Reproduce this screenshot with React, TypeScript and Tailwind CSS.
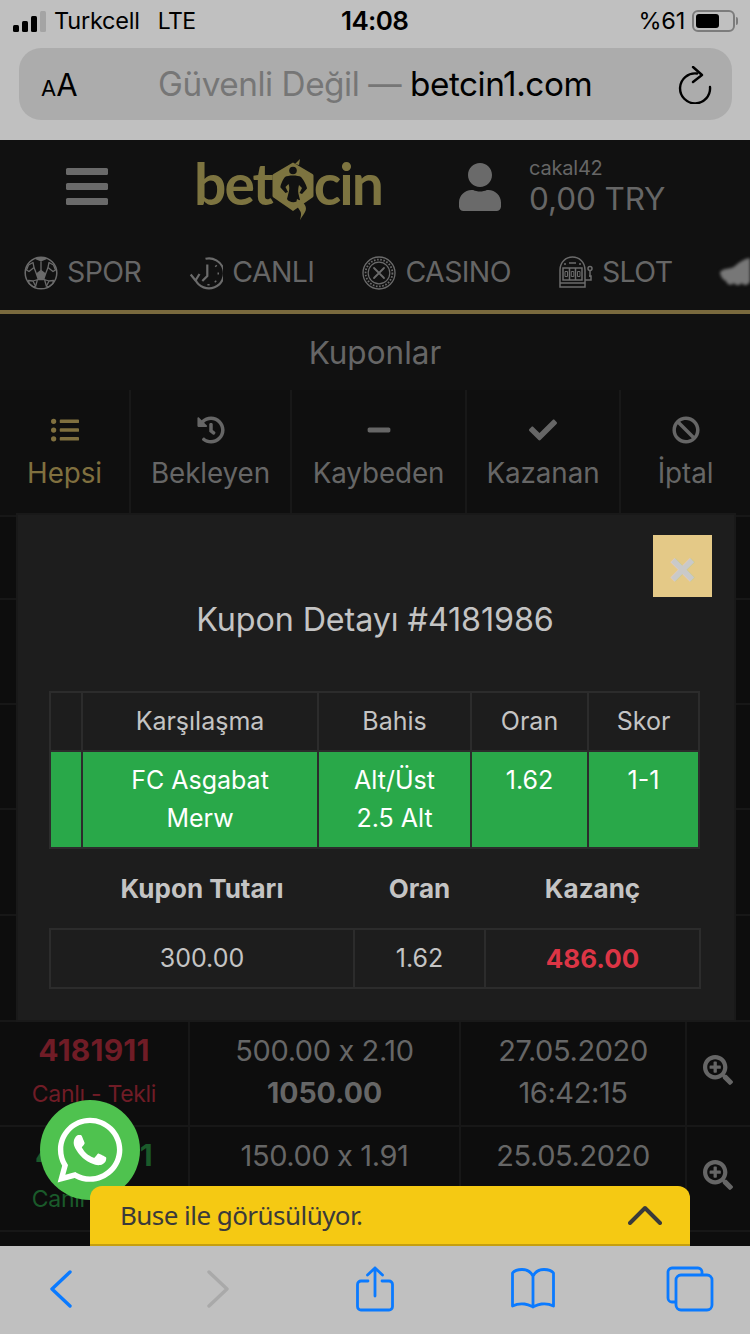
import React from "react";
import { FaBan, FaCheck, FaHistory, FaListUl, FaMinus, FaSearchPlus, FaUser, FaWhatsapp } from "react-icons/fa";

const sans = "font-['Inter','Liberation_Sans',sans-serif]";

function Football() {
  return (
    <svg width="34" height="34" viewBox="0 0 34 34" fill="none" stroke="#6b6b6b" strokeWidth="1.300" strokeLinejoin="round">
      <circle cx="17" cy="17" r="15.800" strokeWidth="1.500" />
      <path d="M12.500 18l4.500-3.500 4.500 3.500-1.800 5.500h-5.400z" fill="#6b6b6b" />
      <path d="M11 3l6 2.500L23 3l-1-1.500H12z" fill="#6b6b6b" stroke="none" />
      <path d="M4.500 9l4.500-2.500 1 5-5 4-2.500-1.500z" />
      <path d="M29.500 9 25 6.500l-1 5 5 4 2.500-1.500z" />
      <path d="M4.500 24.500l4.500.5 2.500 5-2 1-4.500-3.500zM29.500 24.500l-4.500.5-2.500 5 2 1 4.500-3.500z" />
      <path d="M17 5.500v9M10 11.500l2.500 6.500M24 11.500L21.500 18M9 25l5-1.500M25 25l-5-1.500M11.500 30.500l2-7M22.500 30.500l-2-7" />
    </svg>
  );
}

function LiveClock() {
  return (
    <svg width="34" height="34" viewBox="0 0 34 34" fill="none" stroke="#6b6b6b" strokeWidth="2.200">
      <path d="M16.500 2.800A15 15 0 1 1 6.500 24" />
      <path d="M1.700 18.500 6.500 24.500l4-6.500" strokeLinejoin="round" />
      <path d="M18.300 8.500V20l-5 5" strokeWidth="2.200" />
      <path d="M26.500 9.500l1 1M28.500 17.500h1.500M26 25l1 1M19.500 28v1.500" />
    </svg>
  );
}

function Roulette() {
  return (
    <svg width="34" height="34" viewBox="0 0 34 34" fill="none" stroke="#6b6b6b">
      <circle cx="17" cy="17" r="16" strokeWidth="1.300" />
      <circle cx="17" cy="17" r="13.400" strokeWidth="1.800" strokeDasharray="1.600 1.600" />
      <circle cx="17" cy="17" r="10.800" strokeWidth="1.200" />
      <path d="M12 12l10 10M22 12 12 22" strokeWidth="1.800" strokeLinecap="round" />
    </svg>
  );
}

function SlotMachine() {
  return (
    <svg width="34" height="34" viewBox="0 0 34 34" fill="none" stroke="#6b6b6b" strokeWidth="1.500">
      <path d="M1 31V14C1 6 7 1 13.500 1S26 6 26 14v17z" />
      <path d="M1 27h25M10 7h7M5 8h2M20 8h2" />
      <rect x="4" y="12" width="19" height="12" />
      <path d="M10.500 12v12M16.500 12v12" />
      <path d="M6 15.500h2.500v5H6zM12.300 15.500h2.500v5h-2.500zM18.500 15.500H21v5h-2.500z" strokeWidth="1" />
      <circle cx="31" cy="12.500" r="2" />
      <path d="M31 14.500V21M26 24h6v-4h-2" />
    </svg>
  );
}

function HorseBlob() {
  return (
    <svg width="30" height="30" viewBox="0 0 30 30" fill="#777" className="shrink-0 blur-[1.500px]">
      <path d="M0 14C5 9 10 12 15 8 19 4 24 1 30 0v24c-3 4-6 4-8 1-3 3-6 3-8 0-3 3-7 2-8-2-3-1-6-5-6-9z" />
    </svg>
  );
}

function Genie() {
  return (
    <svg width="46" height="62" viewBox="0 0 46 62" className="shrink-0">
      <path d="M23 3.500 42.500 15a2 2 0 0 1 1 1.800v20a2 2 0 0 1-1 1.700L23 52 3.500 38.500a2 2 0 0 1-1-1.700v-20a2 2 0 0 1 1-1.800z" fill="#7d7440" />
      <path d="M25 5l5-5-1 6z" fill="#7d7440" />
      <circle cx="23" cy="11.500" r="3.800" fill="#111" />
      <path d="M15 18c3-2 13-2 16 0 2 2 6 9 6 11.500L32 35l-2.500-1 2.500-5-3-3c-1 4-1 6-.5 9l1.500 6c-4 3-11 3-13-1l2-8c.500-3 .300-5-.5-7l-3 3 2.500 5-2.500 1-5-5.500C10 27 13 20 15 18z" fill="#111" />
      <path d="M27 40c7 3 11 8 8 13-1 2-2.500 4-5 8 1-4 2-7-.5-10-2-3-4-6-2.500-11z" fill="#7d7440" />
    </svg>
  );
}

function Reload() {
  return (
    <svg width="34" height="38" viewBox="0 0 34 38" fill="none" stroke="#000" strokeWidth="2.400" strokeLinecap="round" strokeLinejoin="round">
      <path d="M19 7.500A15 15 0 1 0 32 21" />
      <path d="M15 1l9 8-9 7" />
    </svg>
  );
}

const blue = "#0a7aff";

function Toolbar() {
  return (
    <div className="h-[88px] shrink-0 bg-[#c0c0c0] flex items-center">
      <svg className="ml-[49px] -mt-[3px]" width="24" height="38" viewBox="0 0 24 38" fill="none" stroke={blue} strokeWidth="3.400" strokeLinecap="round" strokeLinejoin="round">
        <path d="M21 2 3 19l18 17" />
      </svg>
      <svg className="ml-[133px] -mt-[3px]" width="24" height="38" viewBox="0 0 24 38" fill="none" stroke="#a9a9a9" strokeWidth="3.400" strokeLinecap="round" strokeLinejoin="round">
        <path d="M3 2l18 17L3 36" />
      </svg>
      <svg className="ml-[126px] -mt-[2px]" width="38" height="46" viewBox="0 0 38 46" fill="none" stroke={blue} strokeWidth="2.800" strokeLinecap="round" strokeLinejoin="round">
        <path d="M12 15H5a3.500 3.500 0 0 0-3.500 3.500v22A3.500 3.500 0 0 0 5 44h28a3.500 3.500 0 0 0 3.500-3.500v-22A3.500 3.500 0 0 0 33 15h-7" />
        <path d="M19 30V2M11.500 9 19 2l7.500 7" />
      </svg>
      <svg className="ml-[116px] -mt-[3px]" width="46" height="42" viewBox="0 0 46 42" fill="none" stroke={blue} strokeWidth="2.800" strokeLinecap="round" strokeLinejoin="round">
        <path d="M23 8c-2-4-6-6.500-11-6.500C7 1.500 4 3 2.500 5v33c4-2 8-2.500 12-2 4 .500 6.500 2 8.500 3 2-1 4.500-2.500 8.500-3s8 0 12 2V5C42 3 39 1.500 34 1.500 29 1.500 25 4 23 8zM23 8v31" />
      </svg>
      <svg className="ml-[110px] -mt-[2px]" width="48" height="46" viewBox="0 0 48 46" fill="none" stroke={blue} strokeWidth="2.800" strokeLinejoin="round">
        <path d="M36 8V6a4 4 0 0 0-4-4H6a4 4 0 0 0-4 4v26a4 4 0 0 0 4 4h4" />
        <rect x="10" y="9" width="36" height="35" rx="5" />
      </svg>
    </div>
  );
}

function StatusUrl() {
  return (
    <div className={`h-[140px] shrink-0 bg-[#c0c0c0] ${sans} flex flex-col`}>
      <div className="h-[48px] relative flex items-center pl-[13px] pr-[12px] pb-[6px] text-[#000]">
        <div className="flex items-end gap-[3px] h-[22px]">
          <span className="w-[6px] h-[7px] rounded-[1.500px] bg-black" />
          <span className="w-[6px] h-[11px] rounded-[1.500px] bg-black" />
          <span className="w-[6px] h-[16px] rounded-[1.500px] bg-black" />
          <span className="w-[6px] h-[21px] rounded-[1.500px] bg-[#a4a4a4]" />
        </div>
        <span className="ml-[8px] text-[23.500px] tracking-[-0.2px]">Turkcell</span>
        <span className="ml-[18px] text-[23px] tracking-[-0.6px]">LTE</span>
        <span className="absolute left-[341px] top-[6px] text-[26px] font-semibold leading-[30px] tracking-[-0.6px]">14:08</span>
        <span className="ml-auto text-[23.500px] tracking-[-0.2px]">%61</span>
        <div className="ml-[7px] flex items-center">
          <div className="w-[43px] h-[22px] rounded-[6px] border-2 border-[#7c7c7c] p-[2px]">
            <div className="h-full w-[23px] rounded-[3px] bg-black" />
          </div>
          <div className="w-[2px] h-[8px] rounded-r bg-[#7c7c7c] ml-[1px]" />
        </div>
      </div>
      <div className="mx-[19px] h-[72px] w-[713px] rounded-[22px] bg-[#acacac] flex items-center pl-[22px] pr-[20px]">
        <span className="w-[38px] leading-none whitespace-nowrap">
          <span className="text-[22px]">A</span>
          <span className="text-[31px]">A</span>
        </span>
        <span className="ml-[79px] mt-[1px] text-[33.300px] tracking-[-0.45px] whitespace-nowrap text-[#767676]">
          Güvenli Değil — <span className="text-black">betcin1.com</span>
        </span>
        <span className="ml-auto mt-[2px]"><Reload /></span>
      </div>
    </div>
  );
}

function SiteHeader() {
  return (
    <div className="h-[95px] bg-[#111] flex items-center pl-[66px]">
      <div className="w-[42px] flex flex-col gap-[8px] -mt-[2px]">
        <span className="h-[7px] rounded-[1.500px] bg-[#6a6a6a]" />
        <span className="h-[7px] rounded-[1.500px] bg-[#6a6a6a]" />
        <span className="h-[7px] rounded-[1.500px] bg-[#6a6a6a]" />
      </div>
      <div className="ml-[87px] w-[186px] flex items-center justify-center -mt-[2px] font-['Lato',sans-serif] font-bold text-[57px] leading-none text-[#7d7440] tracking-[-2px] whitespace-nowrap">
        <span className="-mt-[6px]">bet</span>
        <span className="-mx-[2px] mt-[6px]"><Genie /></span>
        <span className="-mt-[6px]">cin</span>
      </div>
      <FaUser className="ml-[75px] -mt-[2px] text-[#6a6a6a] shrink-0" size={48} />
      <div className={`ml-[25px] ${sans} text-[#666] -mt-[3px]`}>
        <div className="text-[20px] leading-[24px] tracking-[-0.2px]">cakal42</div>
        <div className="text-[31.500px] leading-[37px] tracking-[-0.1px]">0,00 TRY</div>
      </div>
    </div>
  );
}

function Nav() {
  const items: [React.ReactNode, string][] = [
    [<Football />, "SPOR"],
    [<LiveClock />, "CANLI"],
    [<Roulette />, "CASINO"],
    [<SlotMachine />, "SLOT"],
  ];
  return (
    <div className={`h-[79px] shrink-0 bg-[#111] border-b-4 border-[#7a6a3e] flex items-center gap-[48px] pl-[24px] overflow-hidden ${sans}`}>
      {items.map(([icon, label]) => (
        <div key={label} className="flex items-center gap-[9px] shrink-0 text-[28.500px] text-[#666] tracking-[-0.6px]">
          {icon}
          <span>{label}</span>
        </div>
      ))}
      <HorseBlob />
    </div>
  );
}

function Tabs() {
  const tabs = [
    { w: "w-[131px]", icon: <FaListUl size={28} />, label: "Hepsi", active: true },
    { w: "w-[161px]", icon: <FaHistory size={28} />, label: "Bekleyen" },
    { w: "w-[175px]", icon: <FaMinus size={26} />, label: "Kaybeden" },
    { w: "w-[154px]", icon: <FaCheck size={28} />, label: "Kazanan" },
    { w: "w-[129px]", icon: <FaBan size={28} />, label: "İptal" },
  ];
  return (
    <div className={`h-[125px] flex bg-[#0f0f0f] ${sans}`}>
      {tabs.map((t) => (
        <div
          key={t.label}
          className={`${t.w} flex flex-col items-center pt-[25px] border-r-2 border-[#181818] last:border-r-0 ${t.active ? "text-[#80703f]" : "text-[#666]"}`}
        >
          <div className="h-[30px] flex items-center">{t.icon}</div>
          <div className="text-[27.800px] leading-[34px] mt-[11px] tracking-[-0.1px]">{t.label}</div>
        </div>
      ))}
    </div>
  );
}

const rows = [
  { id: "", line1: "", line2: "", d1: "", d2: "", type: "", h: "h-[83px]" },
  { id: "", line1: "", line2: "", d1: "", d2: "", type: "", h: "h-[105px]" },
  { id: "", line1: "", line2: "", d1: "", d2: "", type: "", h: "h-[105px]" },
  { id: "", line1: "", line2: "", d1: "", d2: "", type: "", h: "h-[106px]" },
  { id: "", line1: "", line2: "", d1: "", d2: "", type: "", h: "h-[106px]" },
  { id: "4181911", line1: "500.00 x 2.10", line2: "1050.00", d1: "27.05.2020", d2: "16:42:15", type: "Canlı - Tekli", h: "h-[105px]", lost: true },
  { id: "4181891", line1: "150.00 x 1.91", line2: "", d1: "25.05.2020", d2: "", type: "Canlı - Tekli", h: "h-[105px]" },
  { id: "", line1: "", line2: "", d1: "", d2: "", type: "", h: "h-[105px]" },
];

function Rows() {
  return (
    <div className={`${sans} text-[#666]`}>
      {rows.map((r, i) => (
        <div key={i} className={`${r.h} flex border-t-2 border-[#171717] bg-[#0d0d0d]`}>
          <div className={`w-[190px] border-r-2 border-[#171717] text-center pt-[9px] ${r.lost ? "text-[#701c26]" : "text-[#1a5a2a]"}`}>
            <div className="text-[30px] font-bold leading-[38px] tracking-[0.2px]">{r.id}</div>
            <div className="text-[23px] leading-[30px] mt-[10px] tracking-[-0.3px]">{r.type}</div>
          </div>
          <div className="w-[271px] border-r-2 border-[#171717] text-center pt-[8px]">
            <div className="text-[29px] leading-[42px] tracking-[-0.4px]">{r.line1}</div>
            <div className="text-[28.500px] leading-[42px] font-bold">{r.line2}</div>
          </div>
          <div className="w-[226px] border-r-2 border-[#171717] text-center pt-[8px]">
            <div className="text-[29px] leading-[42px] tracking-[-0.4px]">{r.d1}</div>
            <div className="text-[29px] leading-[42px] tracking-[-0.4px]">{r.d2}</div>
          </div>
          <div className="flex-1 flex items-center pl-[16px] pb-[7px]">
            {r.id && <FaSearchPlus size={30} className="text-[#666]" />}
          </div>
        </div>
      ))}
    </div>
  );
}

function Modal() {
  const th = "border-2 border-[#2c2c2c] font-normal h-[59px] align-middle";
  const td = "border-2 border-[#2c2c2c] align-top pt-[9px] leading-[38px] pb-[10px]";
  return (
    <div className={`absolute left-[16px] top-[373px] w-[720px] h-[509px] bg-[#1d1d1d] border-2 border-[#191919] ${sans} text-[#c4c4c4]`}>
      <button className="absolute right-[22px] top-[20px] w-[59px] h-[62px] bg-[#e4c987] text-[#c9c9c9] text-[46px] leading-none font-bold flex items-center justify-center">
        ×
      </button>
      <h2 className="text-center text-[32.300px] leading-[40px] mt-[85px] pr-[2px] tracking-[-0.1px]">Kupon Detayı #4181986</h2>
      <table className="mt-[51px] ml-[31px] w-[651px] table-fixed border-collapse text-[25px] text-center">
        <thead>
          <tr>
            <th className={`${th} w-[32px]`} />
            <th className={`${th} w-[236px]`}>Karşılaşma</th>
            <th className={`${th} w-[153px]`}>Bahis</th>
            <th className={`${th} w-[117px]`}>Oran</th>
            <th className={th}>Skor</th>
          </tr>
        </thead>
        <tbody className="bg-[#29a849] text-white">
          <tr>
            <td className={td} />
            <td className={td}>FC Asgabat<br />Merw</td>
            <td className={td}>Alt/Üst<br />2.5 Alt</td>
            <td className={td}>1.62</td>
            <td className={td}>1-1</td>
          </tr>
        </tbody>
      </table>
      <table className="ml-[31px] w-[652px] table-fixed border-collapse text-[25px] text-center">
        <thead>
          <tr>
            <th className="h-[80px] w-[304px] font-bold text-[26px]">Kupon Tutarı</th>
            <th className="h-[80px] w-[131px] font-bold text-[26px]">Oran</th>
            <th className="h-[80px] font-bold text-[26px]">Kazanç</th>
          </tr>
        </thead>
        <tbody>
          <tr>
            <td className="border-2 border-[#2c2c2c] h-[59px]">300.00</td>
            <td className="border-2 border-[#2c2c2c] h-[59px]">1.62</td>
            <td className="border-2 border-[#2c2c2c] h-[59px] font-bold text-[#dc3545] text-[26px]">486.00</td>
          </tr>
        </tbody>
      </table>
    </div>
  );
}

function Site() {
  return (
    <div className="relative flex-1 overflow-hidden bg-[#111]">
      <SiteHeader />
      <Nav />
      <div className={`h-[76px] pt-[1px] flex items-center justify-center text-[31.500px] text-[#666] ${sans}`}>Kuponlar</div>
      <Tabs />
      <Rows />
      <Modal />
      <div className="absolute left-[40px] top-[960px] w-[100px] h-[100px] rounded-full bg-[#4fc24f] flex items-center justify-center text-white">
        <FaWhatsapp size={74} />
      </div>
      <div className="absolute left-[90px] bottom-0 w-[600px] h-[60px] rounded-t-[12px] bg-[#f5c913] border-b-2 border-[#c59f0f] flex items-center justify-between pl-[30px] pr-[28px] text-[#3a3a3a]">
        <span className="font-['Noto_Sans',sans-serif] text-[26px] tracking-[-0.55px] pt-[1px]">Buse ile görüsülüyor.</span>
        <svg width="34" height="20" viewBox="0 0 34 20" fill="none" stroke="#3a3a3a" strokeWidth="4" strokeLinecap="round" strokeLinejoin="round">
          <path d="M2 18 17 3l15 15" />
        </svg>
      </div>
    </div>
  );
}

export default function App() {
  return (
    <div className="relative w-[750px] h-[1334px] overflow-hidden flex flex-col">
      <StatusUrl />
      <Site />
      <Toolbar />
    </div>
  );
}
